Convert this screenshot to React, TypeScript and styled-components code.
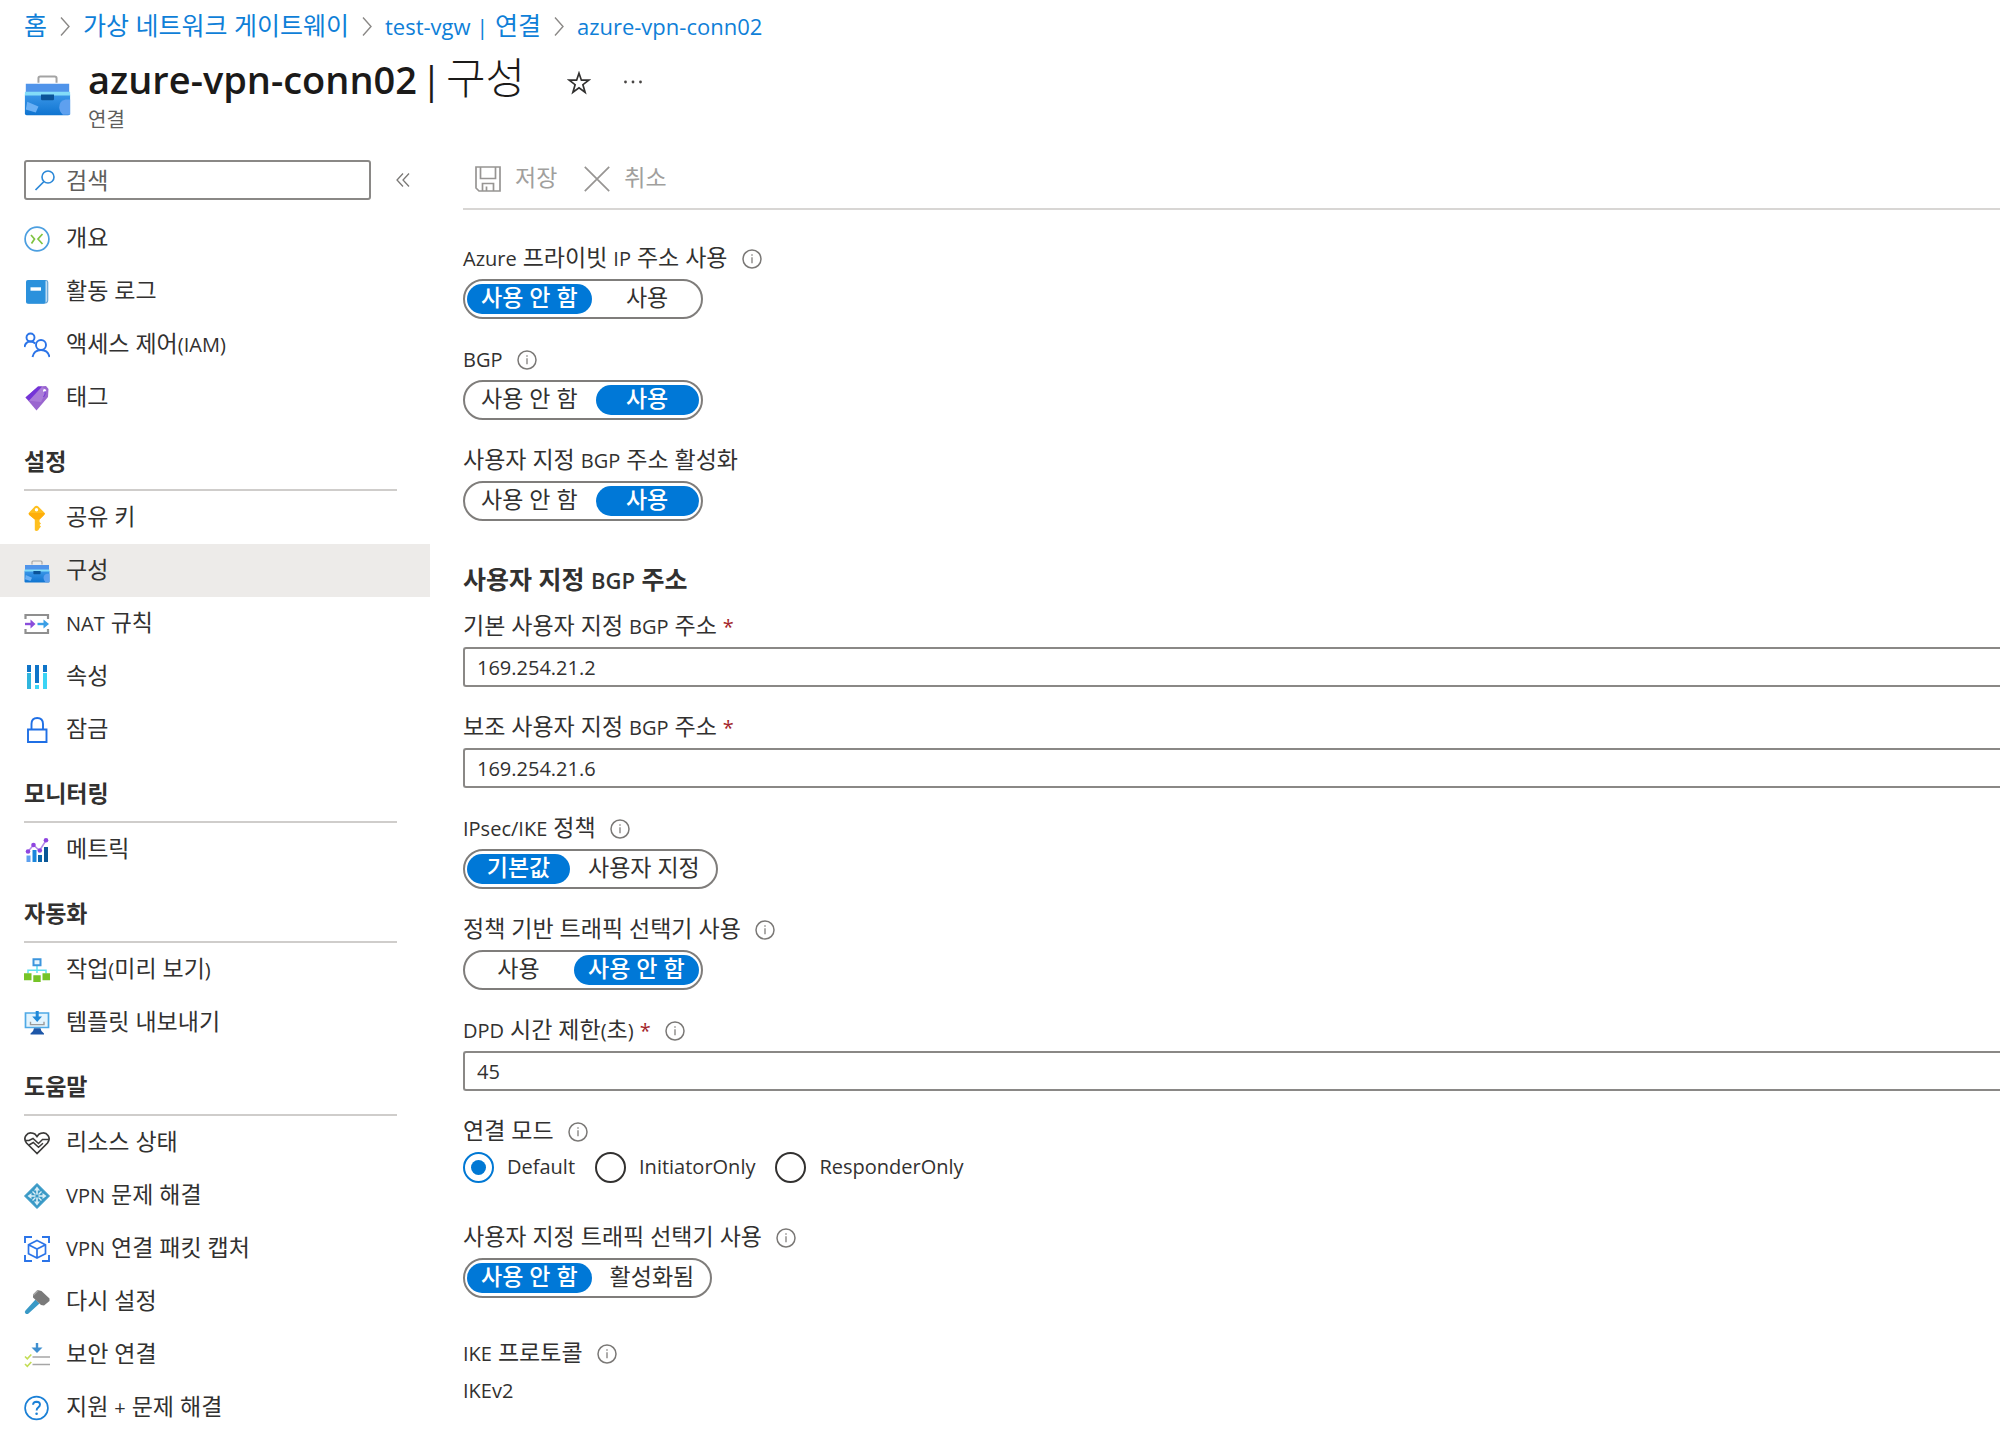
import React, { useId, useState } from "react";
import styled, { createGlobalStyle, css } from "styled-components";

const LATIN = `"Open Sans", "Noto Sans", "Noto Sans CJK KR", sans-serif`;

const GlobalStyle = createGlobalStyle`
  *, *::before, *::after { box-sizing: border-box; }
  body {
    margin: 0;
    background: #fff;
    color: #323130;
    font-family: ${LATIN};
    overflow-x: hidden;
  }
  button, input { font: inherit; color: inherit; }
  a { text-decoration: none; }
  svg { display: block; flex: none; }
`;

/* ---------- text ---------- */

const Hangul = styled.span`
  line-height: 1;
`;

/* Hangul runs are set a little larger than the Latin text beside them. */
const type = (latin: number, hangul: number) => css`
  font-size: ${latin}px;
  ${Hangul} { font-size: ${hangul}px; }
`;

const bodyType = type(20, 23);
const largeType = type(22, 25);

function Text({ children }: { children: string }) {
  return (
    <span>
      {children.split(/( ?[가-힣]+(?: [가-힣]+)* ?)/).map((part, i) =>
        i % 2 ? <Hangul key={i}>{part}</Hangul> : part
      )}
    </span>
  );
}

/* ---------- icons ---------- */

type IconProps = { size?: number };

const Svg = ({ size = 26, box = 26, children }: { size?: number; box?: number; children: React.ReactNode }) => (
  <svg width={size} height={size} viewBox={`0 0 ${box} ${box}`} fill="none" aria-hidden="true">
    {children}
  </svg>
);

function Toolbox({ size }: IconProps) {
  const id = useId();
  return (
    <Svg size={size}>
      <defs>
        <linearGradient id={id} x1="0" y1="0" x2="0" y2="1">
          <stop offset="0" stopColor="#3a96e8" />
          <stop offset="1" stopColor="#0f74d0" />
        </linearGradient>
      </defs>
      <path d="M8 6.500V4Q8 3 9 3h8q1 0 1 1v2.500" stroke="#a3a3a3" strokeWidth="1.100" />
      <path d="M1 7h24v5H1z" fill="#5094ea" />
      <path d="M.5 13h25v10.500q0 1-1 1h-23q-1 0-1-1z" fill={`url(#${id})`} />
      <path d="M.5 11.500h25v2H.5z" fill="#83dcf8" />
      <path d="M9.400 13h7.200v2.500q0 .7-.7.7h-5.800q-.7 0-.7-.7z" fill="#0a5398" />
      <path d="M1.800 17l6.200 2.700-1.500 3.300-5.500-1.700z" fill="#6ab0f5" />
      <path d="M25.500 15.800v8.400h-4q-2-2-2-4.200 0-3.400 3.500-4.200z" fill="#5ea0ef" />
    </Svg>
  );
}

const Overview = () => (
  <Svg>
    <circle cx="13" cy="13" r="11.900" stroke="#4c9fe0" strokeWidth="1.700" />
    <path d="M7 9l3.500 4L7.500 17.500M18.500 8L14 13l4.500 5" stroke="#7fc241" strokeWidth="1.700" />
  </Svg>
);

const Book = () => (
  <Svg>
    <path d="M5 1.500h17q1.700 0 1.700 1.700v18.300q0 1.500-1.500 2.300H5z" fill="#c4def3" stroke="#6aa6d6" strokeWidth="1.200" />
    <path d="M3.800 1h17.700v22q0 1.700-1.700 1.700h-16Q2 24.700 2 23V2.800Q2 1 3.800 1z" fill="#2b91dc" />
    <path d="M6.500 8.300h10.500v3.400H6.500z" fill="#fff" />
  </Svg>
);

const People = () => (
  <Svg>
    <g stroke="#2b74e8" strokeWidth="1.900">
      <circle cx="6.500" cy="5.500" r="4" />
      <circle cx="17" cy="13" r="5" />
      <path d="M.5 15Q1.500 9.500 6.500 9.500q2.800 0 4.800 2M8.500 25Q10 18 17 18t8.500 7" />
    </g>
  </Svg>
);

const Tag = () => (
  <Svg>
    <path d="M1.500 12.500L14 1.500l8-.5 2.500 3-.5 8L12.500 25.500z" fill="#9a66cf" />
    <path d="M1.500 12.500L14 1.500l4 0L5 15.800z" fill="#7434d8" />
    <path d="M5 15.800L18 2l5 3-6 12z" fill="#b58ae0" opacity=".6" />
    <circle cx="20.500" cy="5.500" r="1.500" fill="#fff" />
    <path d="M21 6q1 3-1.500 6" stroke="#7434d8" strokeWidth="1" />
  </Svg>
);

const Key = () => (
  <Svg>
    <path d="M12.500.8q1 0 1.800.8l5.800 5.700q1.200 1.400 0 2.800l-4.600 4.400v2.500l1.500 1.500-1.500 1.500 1.500 1.500-1.500 1.800-1.200 2q-1.800 1.400-3.500 0V14.500L5.300 10.100q-1.200-1.400 0-2.800l5.400-5.700q.8-.8 1.800-.8z" fill="#ffc01f" />
    <path d="M4.800 8h16q.2 1.200-.8 2.100l-4.500 4.400h-4.700L5.300 10.100q-.8-1-.5-2.100z" fill="#ffae0a" />
    <circle cx="12.500" cy="4.800" r="1.700" fill="#fff" />
  </Svg>
);

const Nat = () => (
  <Svg>
    <path d="M1.500 8V4h22.500v4M1.500 18v4h22.500v-4" stroke="#8f8f8f" strokeWidth="2.200" />
    <path d="M1 13h7" stroke="#8a4ddb" strokeWidth="2.400" />
    <path d="M6.500 8.500L11.500 13l-5 4.500z" fill="#8a4ddb" />
    <path d="M13.500 13h7" stroke="#3b9fe6" strokeWidth="2.400" />
    <path d="M19.500 8.500L25 13l-5.500 4.500z" fill="#3b9fe6" />
  </Svg>
);

const Properties = () => (
  <Svg>
    <path d="M3 1h4v7H3zM11 1h4v18h-4zM19 1h4v7h-4z" fill="#0f74c8" />
    <path d="M3 9h4v16H3z" fill="#2fb5dd" />
    <path d="M11 21h4v4h-4zM19 9h4v16h-4z" fill="#3bd4f5" />
  </Svg>
);

const Lock = () => (
  <Svg>
    <path d="M4 12.500h18.500V25H4zM7.500 12V7q0-6 5.700-6T19 7v5" stroke="#1f6fe5" strokeWidth="1.900" />
  </Svg>
);

const Metrics = () => (
  <Svg>
    <path d="M2.500 18.500h4V25h-4z" fill="#5ea0ef" />
    <path d="M8.500 13h4v12h-4z" fill="#1b86dc" />
    <path d="M14 18h4v7h-4z" fill="#0b67ad" />
    <path d="M20 10h4v15h-4z" fill="#0b5796" />
    <path d="M4 14.500L9.500 8l6 5.500 6.500-10" stroke="#b48ae8" strokeWidth="1.500" />
    <g fill="#8f45e0">
      <circle cx="4" cy="14.500" r="2.300" />
      <circle cx="9.500" cy="8" r="2.300" />
      <circle cx="15.800" cy="13.500" r="2.300" />
      <circle cx="22" cy="3.200" r="2.300" />
    </g>
  </Svg>
);

const Tasks = () => (
  <Svg>
    <path d="M13 9v7M4 16.500v-3.300h18v3.300" stroke="#5fe0f0" strokeWidth="1.500" />
    <path d="M9.500 2.300h7v6h-7z" stroke="#3c95dd" strokeWidth="2" fill="#e8f4fd" />
    <path d="M0 16.300h7.500v7H0zM9.300 18.300h7.400V25H9.300zM18.500 16.300H26v7h-7.500z" fill="#76c428" />
  </Svg>
);

const Export = () => (
  <Svg>
    <path d="M1.500 3h23v14.500h-23z" fill="#e3f4fe" stroke="#4fa9e6" strokeWidth="1.700" />
    <path d="M11.700 1h3v5.500H18L13.200 12 8.200 6.500h3.500z" fill="#1f88d8" />
    <path d="M6.500 11.800v2.800h13.500v-2.800" stroke="#9a9a9a" strokeWidth="1.400" />
    <path d="M10 18.300h6.500q.2 3.200 3.500 5.200v1H6.500v-1q3.300-2 3.500-5.200z" fill="#1d57a8" />
  </Svg>
);

const Heart = () => (
  <Svg>
    <path d="M13 23.500L2.500 13Q-.5 9 2 5.500t6.500-2.300Q11 3.500 13 6.500q2-3 4.500-3.300Q21.500 2 24 5.500T23.500 13z" stroke="#3b3a39" strokeWidth="1.700" />
    <path d="M1.500 10.500h3.500l4-2 5.500 5 4-4h6.500M5 15l4.300-2.500 5.200 4.800 4.500-4" stroke="#3b3a39" strokeWidth="1.500" />
  </Svg>
);

const VpnDiamond = () => (
  <Svg>
    <path d="M13 .5L25.500 13 13 25.500.5 13z" fill="#3999c6" stroke="#3999c6" strokeLinejoin="round" />
    <path d="M13 6.500v13M6.500 13h13" stroke="#d8eef7" strokeWidth="1.600" />
    <path d="M13 3.500l3 4h-6zM13 22.500l-3-4h6zM3.500 13l4-3v6zM22.500 13l-4 3v-6z" fill="#d8eef7" />
    <path d="M8.500 8.500l3 3M17.500 8.500l-3 3M8.500 17.500l3-3M17.500 17.500l-3-3" stroke="#d8eef7" strokeWidth="1.400" />
    <circle cx="13" cy="13" r="1.600" fill="#3999c6" />
  </Svg>
);

const Packet = () => (
  <Svg>
    <g stroke="#2b74e8" strokeWidth="1.900">
      <path d="M1 7V1h7M18 1h7v6M25 19v6h-7M8 25H1v-6" />
      <path d="M13 4.500l8.500 4.200v9L13 22l-8.500-4.300v-9zM4.500 8.700L13 13l8.500-4.300M13 13v9" strokeWidth="1.700" />
    </g>
  </Svg>
);

const Hammer = () => (
  <Svg>
    <path d="M11.500 10.500l4 4L4.500 24.500q-1.500 1-3 0-1.500-1.500 0-3z" fill="#3999c6" />
    <path d="M9 5.500L13.500 1l4 1 8 7.500V12l-5.500 4.500-3-.5-8-7.500z" fill="#7a7a7a" />
    <path d="M9 5.500L13.500 1l1.500.4L9.500 7z" fill="#a8a8a8" />
  </Svg>
);

const SecurityLink = () => (
  <Svg>
    <path d="M13 1v5" stroke="#3f8fd0" strokeWidth="2.400" />
    <path d="M7.500 5.500h11L13 11z" fill="#3f8fd0" />
    <path d="M8.500 15H26M8.500 22.500H26" stroke="#a6a6a6" strokeWidth="1.600" />
    <path d="M1 14.500l2.300 2.300 4-4.300M1 22l2.300 2.300 4-4.300" stroke="#c3dd55" strokeWidth="1.600" />
  </Svg>
);

const Help = () => (
  <Svg>
    <circle cx="12.500" cy="13" r="11.400" stroke="#1b80d6" strokeWidth="1.700" />
    <path d="M9 9.800q.2-3 3.600-3 3.400.1 3.400 2.800 0 1.600-1.700 2.800-1.700 1.100-1.700 3" stroke="#1b80d6" strokeWidth="1.900" />
    <circle cx="12.600" cy="18.700" r="1.300" fill="#1b80d6" />
  </Svg>
);

const Info = () => (
  <Svg size={20} box={20}>
    <circle cx="10" cy="10" r="9" stroke="#7a7876" strokeWidth="1.500" />
    <path d="M10 8.300v6M10 5.300v1.500" stroke="#8a8886" strokeWidth="1.400" />
  </Svg>
);

const Chevron = () => (
  <svg width="10" height="26" viewBox="0 0 10 26" fill="none" aria-hidden="true">
    <path d="M1 4.500l8 9-8 9" stroke="#8a8886" strokeWidth="1.400" />
  </svg>
);

const SearchIcon = () => (
  <Svg size={22} box={22}>
    <circle cx="14" cy="8" r="6" stroke="#2b88d8" strokeWidth="1.600" />
    <path d="M10 12.500L1.500 21" stroke="#2b88d8" strokeWidth="1.700" />
  </Svg>
);

const Collapse = () => (
  <Svg size={14} box={14}>
    <path d="M7 .5L1 7l6 6.500M13 .5L7 7l6 6.500" stroke="#7a7876" strokeWidth="1.300" />
  </Svg>
);

const Save = () => (
  <Svg>
    <path d="M1 1h24v24H4l-3-3zM5.500 1v11.500h15V1M7.500 25v-7.500h11V25M11.500 20.500V25" stroke="#979593" strokeWidth="1.700" />
  </Svg>
);

const Cross = () => (
  <Svg>
    <path d="M.8.8l24.400 24.400M25.200.8L.8 25.200" stroke="#979593" strokeWidth="1.700" />
  </Svg>
);

const Star = () => (
  <Svg size={24} box={24}>
    <path d="M12 2.200l2.400 7h7.300l-5.800 4.500 2.200 7.500-6.100-4.500-6.100 4.500 2.200-7.500-5.800-4.500h7.300z" stroke="#323130" strokeWidth="1.700" />
  </Svg>
);

const More = () => (
  <Svg size={20} box={20}>
    <g fill="#484644">
      <circle cx="2.500" cy="9" r="1.400" />
      <circle cx="10" cy="9" r="1.400" />
      <circle cx="17.500" cy="9" r="1.400" />
    </g>
  </Svg>
);

/* ---------- header ---------- */

const Breadcrumb = styled.nav`
  ${largeType}
  display: flex;
  align-items: center;
  gap: 13px;
  padding: 11px 24px 0;
  line-height: 30px;
  white-space: nowrap;
  a { color: #0f7fd8; }
`;

const Header = styled.header`
  display: flex;
  align-items: center;
  gap: 17px;
  padding: 14px 24px 0;
`;

const TitleRow = styled.div`
  display: flex;
  align-items: center;
  gap: 32px;
`;

const Title = styled.h1`
  ${type(38, 43)}
  display: flex;
  align-items: baseline;
  gap: 4px;
  margin: 0 10px 0 0;
  padding-bottom: 4px;
  line-height: 48px;
  font-weight: 300;
  white-space: nowrap;
  color: #1b1a19;
  strong { font-weight: 600; }
`;

const Divider = styled.span`
  font-weight: 400;
`;

const Subtitle = styled.div`
  ${type(18, 20)}
  line-height: 26px;
  color: #605e5c;
`;

const IconButton = styled.button`
  display: grid;
  place-items: center;
  padding: 0;
  border: 0;
  background: none;
  cursor: pointer;
`;

const TitleAction = styled(IconButton)`
  padding-top: 4px;
`;

/* ---------- side menu ---------- */

const Columns = styled.div`
  display: grid;
  grid-template-columns: 430px minmax(0, 1fr);
  column-gap: 33px;
  padding-top: 15px;
`;

const SearchRow = styled.div`
  display: flex;
  align-items: center;
  gap: 25px;
  padding: 12px 20px 12px 24px;
`;

const SearchBox = styled.label`
  display: flex;
  align-items: center;
  gap: 10px;
  width: 347px;
  height: 40px;
  padding-left: 8px;
  border: 2px solid #8a8886;
  border-radius: 3px;
  input {
    flex: 1;
    min-width: 0;
    height: 30px;
    padding: 0;
    border: 0;
    outline: 0;
    background: none;
    font-size: 23px;
  }
  input::placeholder { color: #605e5c; opacity: 1; }
`;

const List = styled.ul`
  margin: 0;
  padding: 0;
  list-style: none;
`;

const ItemLink = styled.a<{ $active?: boolean }>`
  ${bodyType}
  display: flex;
  align-items: center;
  gap: 16px;
  height: 53px;
  padding-left: 24px;
  line-height: 30px;
  color: #323130;
  white-space: nowrap;
  background: ${(p) => (p.$active ? "#edebe9" : "none")};
`;

const GroupTitle = styled.h2`
  ${bodyType}
  height: 67px;
  margin: 0 33px 0 24px;
  padding-top: 24px;
  border-bottom: 2px solid #cfcdcb;
  line-height: 30px;
  font-weight: 600;
`;

/* ---------- form ---------- */

const Toolbar = styled.div`
  display: flex;
  align-items: center;
  gap: 27px;
  height: 62px;
  padding: 2px 12px 0;
  border-bottom: 2px solid #d8d6d4;
`;

const ToolButton = styled.button`
  ${bodyType}
  display: flex;
  align-items: center;
  gap: 14px;
  padding: 0;
  border: 0;
  background: none;
  line-height: 30px;
  &:disabled { color: #a19f9d; }
`;

const Form = styled.form`
  display: flex;
  flex-direction: column;
  gap: 27px;
  padding-top: 35px;
`;

const FieldBlock = styled.div<{ $loose?: boolean }>`
  display: flex;
  flex-direction: column;
  align-items: flex-start;
  gap: 6px;
  margin-bottom: ${(p) => (p.$loose ? 15 : 0)}px;
`;

const LabelRow = styled.div`
  ${bodyType}
  display: flex;
  align-items: center;
  gap: 14px;
  height: 28px;
  line-height: 28px;
  white-space: nowrap;
`;

const Required = styled.span`
  margin-left: 6px;
  color: #a4262c;
`;

const SectionTitle = styled.h3`
  ${largeType}
  margin: 17px 0 -9px;
  line-height: 30px;
  font-weight: 600;
`;

const ToggleFrame = styled.div`
  display: flex;
  align-items: center;
  gap: 4px;
  height: 40px;
  padding: 0 2px;
  border: 2px solid #7f7d7b;
  border-radius: 20px;
`;

const ToggleOption = styled.button<{ $on: boolean }>`
  ${bodyType}
  min-width: 103px;
  height: 30px;
  padding: 0 14px;
  border: 0;
  border-radius: 15px;
  line-height: 28px;
  white-space: nowrap;
  cursor: pointer;
  background: ${(p) => (p.$on ? "#0078d7" : "none")};
  color: ${(p) => (p.$on ? "#fff" : "#323130")};
  font-weight: ${(p) => (p.$on ? 500 : 400)};
`;

const TextInput = styled.input`
  width: 100%;
  height: 40px;
  padding: 0 12px;
  border: 2px solid #8a8886;
  border-right: 0;
  border-radius: 3px 0 0 3px;
  outline: 0;
  font-size: 20px;
`;

const RadioRow = styled.div`
  display: flex;
  gap: 20px;
  height: 30px;
`;

const RadioLabel = styled.label`
  display: flex;
  align-items: center;
  gap: 13px;
  font-size: 20px;
  line-height: 30px;
`;

const Radio = styled.input`
  appearance: none;
  display: grid;
  place-items: center;
  width: 31px;
  height: 31px;
  margin: 0;
  border: 2px solid #323130;
  border-radius: 50%;
  &:checked { border-color: #0078d4; }
  &:checked::before {
    content: "";
    width: 15px;
    height: 15px;
    border-radius: 50%;
    background: #0078d4;
  }
`;

const Value = styled.div`
  font-size: 20px;
  line-height: 34px;
`;

type FieldProps = {
  label: string;
  info?: boolean;
  required?: boolean;
  loose?: boolean;
  htmlFor?: string;
  labelId?: string;
  children: React.ReactNode;
};

function Field({ label, info, required, loose, htmlFor, labelId, children }: FieldProps) {
  const content = (
    <>
      <Text>{label}</Text>
      {required && <Required>*</Required>}
    </>
  );
  return (
    <FieldBlock $loose={loose}>
      <LabelRow>
        {htmlFor ? <label htmlFor={htmlFor}>{content}</label> : <span id={labelId}>{content}</span>}
        {info && <Info />}
      </LabelRow>
      {children}
    </FieldBlock>
  );
}

type ToggleProps = { label: string; options: string[]; initial: number; info?: boolean; loose?: boolean };

function ToggleField({ label, options, initial, info, loose }: ToggleProps) {
  const [value, setValue] = useState(initial);
  const id = useId();
  return (
    <Field label={label} info={info} loose={loose} labelId={id}>
      <ToggleFrame role="group" aria-labelledby={id}>
        {options.map((o, i) => (
          <ToggleOption key={o} type="button" $on={i === value} aria-pressed={i === value} onClick={() => setValue(i)}>
            <Text>{o}</Text>
          </ToggleOption>
        ))}
      </ToggleFrame>
    </Field>
  );
}

function InputField({ label, value, info }: { label: string; value: string; info?: boolean }) {
  const id = useId();
  return (
    <Field label={label} info={info} required htmlFor={id}>
      <TextInput id={id} type="text" defaultValue={value} />
    </Field>
  );
}

/* ---------- data ---------- */

type Item = { label: string; Icon: React.ComponentType; active?: boolean };

const groups: { title?: string; items: Item[] }[] = [
  {
    items: [
      { label: "개요", Icon: Overview },
      { label: "활동 로그", Icon: Book },
      { label: "액세스 제어(IAM)", Icon: People },
      { label: "태그", Icon: Tag },
    ],
  },
  {
    title: "설정",
    items: [
      { label: "공유 키", Icon: Key },
      { label: "구성", Icon: Toolbox, active: true },
      { label: "NAT 규칙", Icon: Nat },
      { label: "속성", Icon: Properties },
      { label: "잠금", Icon: Lock },
    ],
  },
  { title: "모니터링", items: [{ label: "메트릭", Icon: Metrics }] },
  {
    title: "자동화",
    items: [
      { label: "작업(미리 보기)", Icon: Tasks },
      { label: "템플릿 내보내기", Icon: Export },
    ],
  },
  {
    title: "도움말",
    items: [
      { label: "리소스 상태", Icon: Heart },
      { label: "VPN 문제 해결", Icon: VpnDiamond },
      { label: "VPN 연결 패킷 캡처", Icon: Packet },
      { label: "다시 설정", Icon: Hammer },
      { label: "보안 연결", Icon: SecurityLink },
      { label: "지원 + 문제 해결", Icon: Help },
    ],
  },
];

const trail = ["홈", "가상 네트워크 게이트웨이", "test-vgw | 연결", "azure-vpn-conn02"];
const modes = ["Default", "InitiatorOnly", "ResponderOnly"];

export default function App() {
  const [mode, setMode] = useState(modes[0]);
  return (
    <>
      <GlobalStyle />
      <Breadcrumb>
        {trail.map((t, i) => (
          <React.Fragment key={t}>
            {i > 0 && <Chevron />}
            <a href="#"><Text>{t}</Text></a>
          </React.Fragment>
        ))}
      </Breadcrumb>
      <Header>
        <Toolbox size={47} />
        <div>
          <TitleRow>
            <Title>
              <strong>azure-vpn-conn02</strong>
              <Divider>|</Divider>
              <Text>구성</Text>
            </Title>
            <TitleAction type="button" aria-label="즐겨찾기"><Star /></TitleAction>
            <TitleAction type="button" aria-label="더 보기"><More /></TitleAction>
          </TitleRow>
          <Subtitle><Text>연결</Text></Subtitle>
        </div>
      </Header>
      <Columns>
        <nav>
          <SearchRow>
            <SearchBox>
              <SearchIcon />
              <input type="text" placeholder="검색" aria-label="검색" />
            </SearchBox>
            <IconButton type="button" aria-label="메뉴 접기"><Collapse /></IconButton>
          </SearchRow>
          {groups.map((g, i) => (
            <section key={i}>
              {g.title && <GroupTitle><Text>{g.title}</Text></GroupTitle>}
              <List>
                {g.items.map(({ label, Icon, active }) => (
                  <li key={label}>
                    <ItemLink href="#" $active={active} aria-current={active ? "page" : undefined}>
                      <Icon />
                      <Text>{label}</Text>
                    </ItemLink>
                  </li>
                ))}
              </List>
            </section>
          ))}
        </nav>
        <main>
          <Toolbar>
            <ToolButton type="button" disabled><Save /><Text>저장</Text></ToolButton>
            <ToolButton type="button" disabled><Cross /><Text>취소</Text></ToolButton>
          </Toolbar>
          <Form>
            <ToggleField label="Azure 프라이빗 IP 주소 사용" options={["사용 안 함", "사용"]} initial={0} info />
            <ToggleField label="BGP" options={["사용 안 함", "사용"]} initial={1} info />
            <ToggleField label="사용자 지정 BGP 주소 활성화" options={["사용 안 함", "사용"]} initial={1} />
            <SectionTitle><Text>사용자 지정 BGP 주소</Text></SectionTitle>
            <InputField label="기본 사용자 지정 BGP 주소" value="169.254.21.2" />
            <InputField label="보조 사용자 지정 BGP 주소" value="169.254.21.6" />
            <ToggleField label="IPsec/IKE 정책" options={["기본값", "사용자 지정"]} initial={0} info />
            <ToggleField label="정책 기반 트래픽 선택기 사용" options={["사용", "사용 안 함"]} initial={1} info />
            <InputField label="DPD 시간 제한(초)" value="45" info />
            <Field label="연결 모드" info loose labelId="connection-mode">
              <RadioRow role="radiogroup" aria-labelledby="connection-mode">
                {modes.map((m) => (
                  <RadioLabel key={m}>
                    <Radio type="radio" name="mode" checked={m === mode} onChange={() => setMode(m)} />
                    {m}
                  </RadioLabel>
                ))}
              </RadioRow>
            </Field>
            <ToggleField label="사용자 지정 트래픽 선택기 사용" options={["사용 안 함", "활성화됨"]} initial={0} info loose />
            <Field label="IKE 프로토콜" info>
              <Value>IKEv2</Value>
            </Field>
          </Form>
        </main>
      </Columns>
    </>
  );
}
